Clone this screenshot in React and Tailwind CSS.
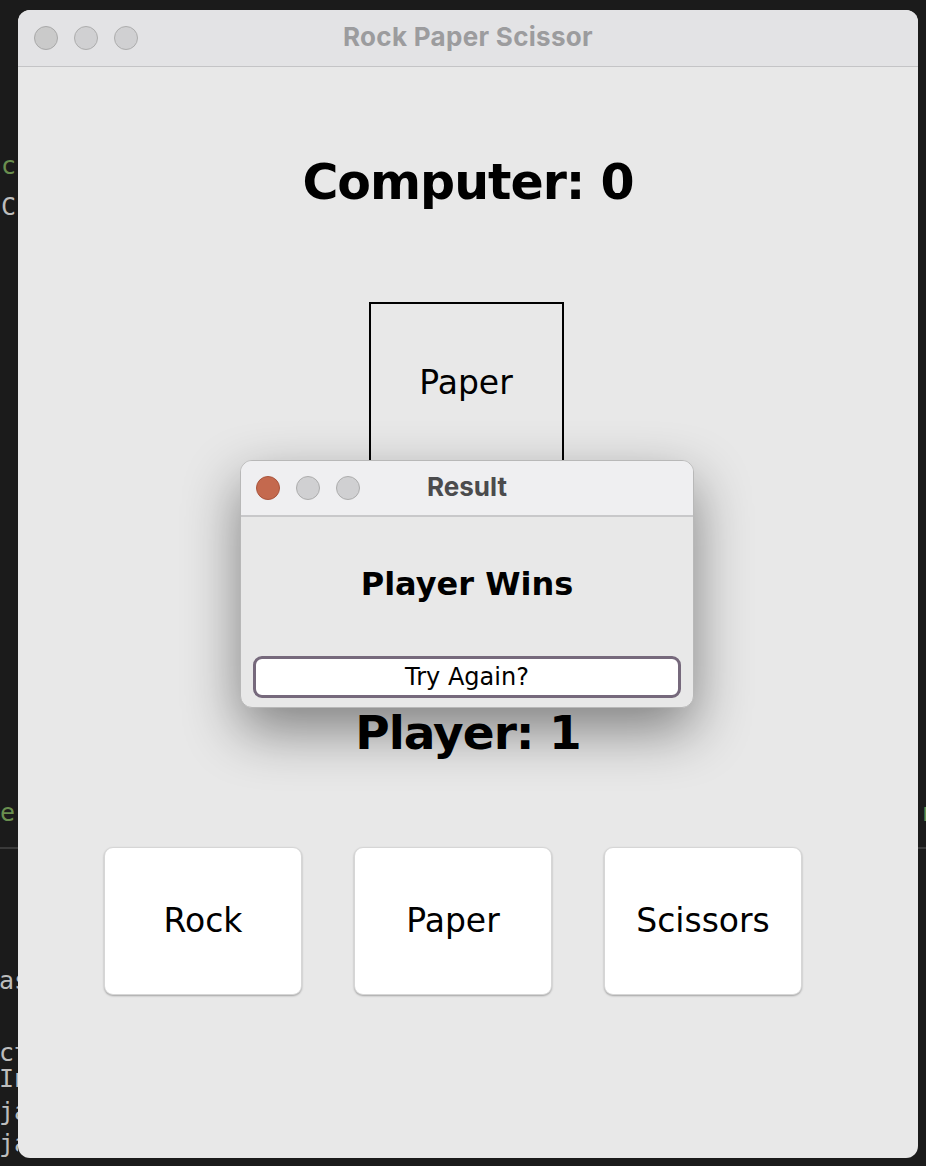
import React from "react"

const codeLeft = [
  { top: 154, left: 1, text: "c", color: "text-[#6a8f4f]" },
  { top: 195, left: 1, text: "C", color: "text-[#bdbdbd]" },
  { top: 801, left: 0, text: "e", color: "text-[#6a8f4f]" },
  { top: 969, left: -1, text: "as", color: "text-[#bdbdbd]" },
  { top: 1041, left: -1, text: "ct", color: "text-[#bdbdbd]" },
  { top: 1067, left: -1, text: "In", color: "text-[#bdbdbd]" },
  { top: 1100, left: -1, text: "ja", color: "text-[#bdbdbd]" },
  { top: 1132, left: -1, text: "ja", color: "text-[#bdbdbd]" },
]

function TrafficLights({ active }) {
  return (
    <div className="flex items-center gap-4">
      <span
        className={
          active
            ? "w-6 h-6 rounded-full bg-[#c4694e] border border-[#a9543c]"
            : "w-6 h-6 rounded-full bg-[#cacaca] border border-[#a9a9a9]"
        }
      />
      <span className="w-6 h-6 rounded-full bg-[#d0d0d2] border border-[#adadad]" />
      <span className="w-6 h-6 rounded-full bg-[#d0d0d2] border border-[#adadad]" />
    </div>
  )
}

function ChoiceButton({ label }) {
  return (
    <button className="w-[198px] h-[148px] bg-white rounded-[9px] border border-[#d6d6d6] shadow-[0_1px_2px_rgba(0,0,0,0.3)] text-[33px] text-black flex items-center justify-center">
      {label}
    </button>
  )
}

export default function App() {
  return (
    <div className="relative w-[926px] h-[1166px] bg-[#1b1b1b] overflow-hidden flex font-['DejaVu_Sans',sans-serif]">
      {/* editor text peeking out behind the window */}
      <div className="relative w-[18px] shrink-0 overflow-hidden font-['DejaVu_Sans_Mono',monospace] text-[25px]">
        {codeLeft.map((l) => (
          <div
            key={l.top}
            className={`absolute leading-[24px] whitespace-nowrap ${l.color}`}
            style={{ top: l.top, left: l.left }}
          >
            {l.text}
          </div>
        ))}
        <div className="absolute left-0 right-0 top-[847px] h-[2px] bg-[#3a3a3a]" />
      </div>

      {/* main window */}
      <div className="relative mt-[10px] w-[900px] h-[1148px] shrink-0 rounded-[12px] overflow-hidden bg-[#e8e8e8] flex flex-col">
        <div className="h-[57px] shrink-0 bg-[#e3e3e5] border-b border-[#c4c4c6] flex items-center px-4 relative">
          <TrafficLights />
          <div className="absolute inset-0 pb-1 flex items-center justify-center font-['Inter',sans-serif] font-bold text-[26px] tracking-[0.3px] text-[#9c9c9e]">
            Rock Paper Scissor
          </div>
        </div>

        <div className="flex flex-col items-center">
          <h1 className="mt-[86px] h-[60px] leading-[60px] text-[49px] font-bold tracking-[-1px] text-black">Computer: 0</h1>
          <div className="mt-[89px] w-[195px] h-[162px] border-2 border-black flex items-center justify-center text-[33px] text-black -translate-x-[2px]">
            Paper
          </div>
          <h2 className="mt-[239px] h-[60px] leading-[60px] text-[47px] font-bold tracking-[-1px] text-black">Player: 1</h2>
        </div>

        <div className="mt-[84px] pl-[86px] flex gap-[52px]">
          <ChoiceButton label="Rock" />
          <ChoiceButton label="Paper" />
          <ChoiceButton label="Scissors" />
        </div>

        {/* result dialog */}
        <div className="absolute left-[222px] top-[450px] w-[454px] h-[248px] rounded-[12px] overflow-hidden bg-[#e8e8e8] border border-[#b8b8b8] shadow-[0_22px_55px_rgba(0,0,0,0.45)] flex flex-col">
          <div className="relative h-[56px] shrink-0 bg-[#efeff1] border-b-2 border-[#c8c8ca] flex items-center px-[15px]">
            <TrafficLights active />
            <div className="absolute inset-0 pb-1 flex items-center justify-center font-['Inter',sans-serif] font-bold text-[26px] text-[#4b4b4d]">
              Result
            </div>
          </div>
          <div className="flex-1 flex flex-col items-center">
            <p className="mt-[47px] leading-[40px] text-[32px] font-bold text-black">Player Wins</p>
            <button className="mt-auto mb-[9px] w-[428px] h-[42px] rounded-[9px] bg-white border-[3px] border-[#76697c] text-[24px] text-black flex items-center justify-center">
              Try Again?
            </button>
          </div>
        </div>
      </div>

      <div className="relative flex-1 overflow-hidden font-['DejaVu_Sans_Mono',monospace] text-[25px]">
        <div className="absolute left-[2px] top-[801px] leading-[24px] text-[#6a8f4f]">r</div>
        <div className="absolute left-0 right-0 top-[847px] h-[2px] bg-[#3a3a3a]" />
      </div>
    </div>
  )
}
